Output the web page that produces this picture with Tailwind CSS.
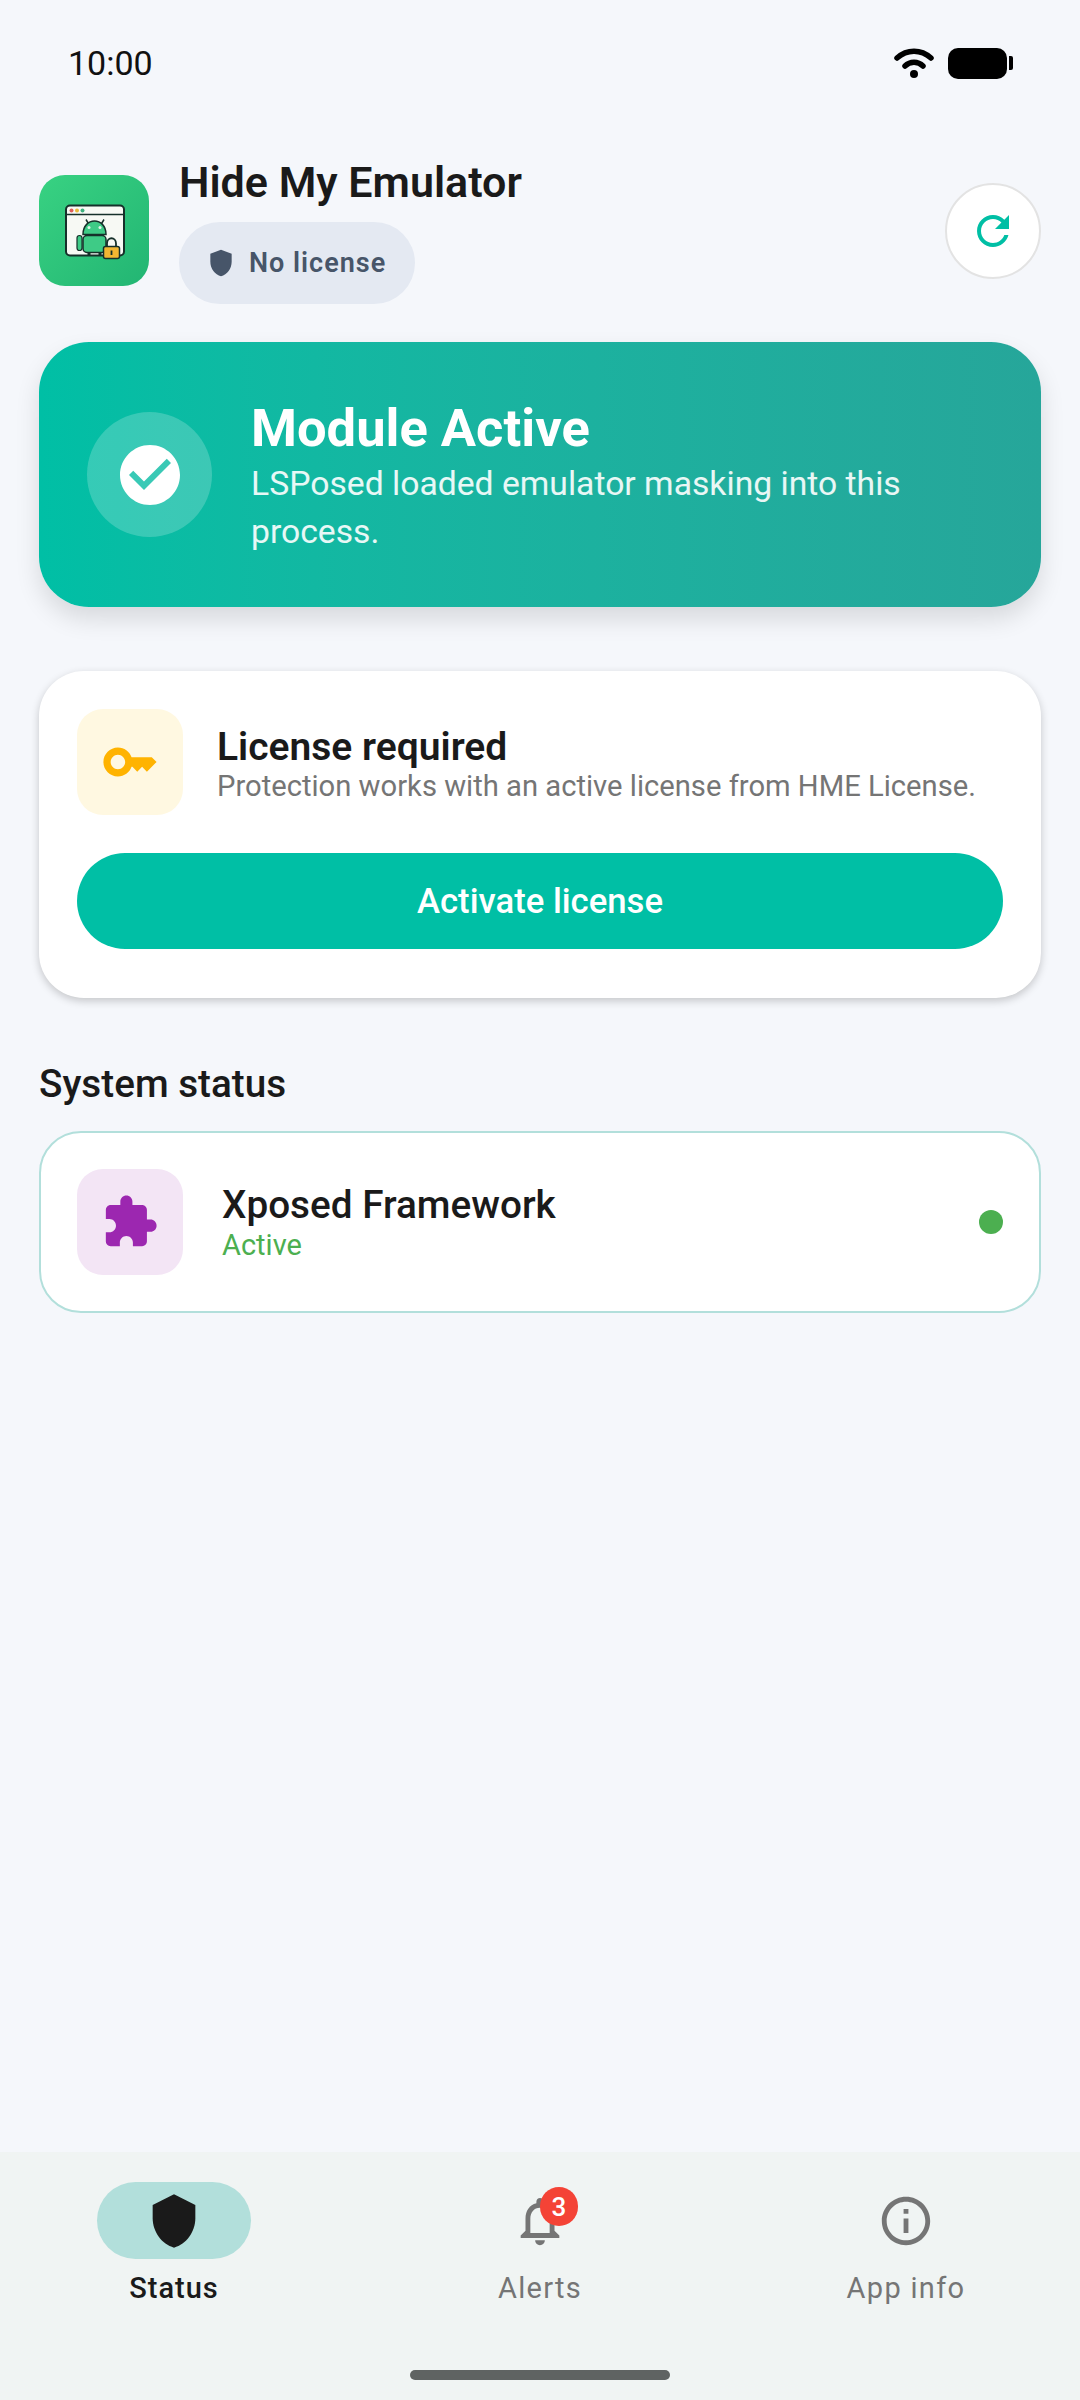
<!DOCTYPE html>
<html lang="en">
<head>
    <meta charset="UTF-8">
    <title>Hide My Emulator</title>
    <script src="https://cdn.jsdelivr.net/npm/@tailwindcss/browser@4"></script>
</head>
<body class="font-['Roboto',sans-serif] bg-[#f5f7fb]">
<div class="flex flex-col w-[1080px] h-[2400px] overflow-hidden">

    <!-- status bar -->
    <div class="flex items-center justify-between h-[124px] pt-[2px] pl-[68px] pr-[67px] shrink-0">
        <span class="text-[34px] leading-none text-[#111]">10:00</span>
        <div class="flex items-center gap-[14px]">
            <svg class="w-[40px] h-[32px]" viewBox="0 0 40 32" fill="none" stroke="#000" stroke-width="5.5" stroke-linecap="round">
                <path d="M3 11C13 2 27 2 37 11"/>
                <path d="M11 19C16 14 24 14 29 19"/>
                <circle cx="20" cy="27" r="4" fill="#000" stroke="none"/>
            </svg>
            <div class="flex items-center gap-[2px]">
                <div class="w-[59px] h-[31px] rounded-[10px] bg-black"></div>
                <div class="w-[4px] h-[14px] rounded-r-[2px] bg-black"></div>
            </div>
        </div>
    </div>

    <main class="flex flex-col px-[39px] pt-[33px]">
        <!-- header -->
        <div class="flex items-center">
            <div class="w-[110px] h-[111px] rounded-[26px] bg-linear-to-br from-[#38d282] to-[#22b573] shrink-0">
                <svg class="w-full h-full" viewBox="0 0 110 110" fill="none">
                    <rect x="27" y="30" width="58" height="50" rx="4" fill="#f7f9f4" stroke="#16302a" stroke-width="2"/>
                    <path d="M27 39H85" stroke="#16302a" stroke-width="1.5"/>
                    <circle cx="32.500" cy="35" r="2" fill="#e0605a"/>
                    <circle cx="38" cy="35" r="2" fill="#e8b93c"/>
                    <circle cx="43.500" cy="35" r="2" fill="#3fb27f"/>
                    <path d="M47 44l3 5M65 44l-3 5" stroke="#16302a" stroke-width="1.500"/>
                    <path d="M44 59c0-18 23-18 23 0z" fill="#3ecb86" stroke="#16302a" stroke-width="1.500"/>
                    <rect x="44" y="60" width="23" height="17" rx="4" fill="#3ecb86" stroke="#16302a" stroke-width="1.500"/>
                    <rect x="38" y="60" width="5" height="15" rx="2.500" fill="#3ecb86" stroke="#16302a" stroke-width="1.200"/>
                    <path d="M50 77v3M61 77v3" stroke="#16302a" stroke-width="3"/>
                    <circle cx="50" cy="52" r="1.500" fill="#dff5e8"/>
                    <circle cx="61" cy="52" r="1.500" fill="#dff5e8"/>
                    <path d="M68 72v-4c0-7 9-7 9 0v4" stroke="#16302a" stroke-width="1.800"/>
                    <rect x="64.500" y="71" width="16" height="12" rx="2" fill="#f2b632" stroke="#16302a" stroke-width="1.500"/>
                    <path d="M72.500 75v4.500" stroke="#16302a" stroke-width="1.800"/>
                </svg>
            </div>
            <div class="flex flex-col items-start ml-[30px]">
                <h1 class="text-[43px] leading-[50px] font-semibold text-[#1a1a1a]">Hide My Emulator</h1>
                <div class="flex items-center h-[82px] mt-[15px] pl-[28px] pr-[29px] rounded-full bg-[#e4e9f2]">
                    <svg class="w-[32px] h-[32px] -ml-[2px]" viewBox="0 0 24 24" fill="#475569"><path d="M12 2L4 5v6.090c0 5.050 3.410 9.760 8 10.910 4.590-1.150 8-5.860 8-10.910V5l-8-3z"/></svg>
                    <span class="ml-[12px] text-[27px] font-semibold tracking-[1px] text-[#475569]">No license</span>
                </div>
            </div>
            <button class="flex items-center justify-center w-[96px] h-[96px] ml-auto rounded-full bg-white border-2 border-[#e3e3e3]">
                <svg class="w-[48px] h-[48px]" viewBox="0 0 24 24" fill="#00bfa5"><path d="M17.650 6.350C16.200 4.900 14.210 4 12 4c-4.420 0-7.990 3.580-7.990 8s3.570 8 7.990 8c3.730 0 6.840-2.550 7.730-6h-2.080c-.820 2.330-3.040 4-5.650 4-3.310 0-6-2.690-6-6s2.690-6 6-6c1.660 0 3.140.690 4.220 1.780L13 11h7V4l-2.350 2.350z"/></svg>
            </button>
        </div>

        <!-- module banner -->
        <section class="flex items-center h-[265px] mt-[38px] pl-[48px] pr-[40px] rounded-[50px] bg-linear-to-r from-[#00bfa5] to-[#26a69a] shadow-[0_12px_24px_rgba(0,0,0,0.12)]">
            <div class="flex items-center justify-center w-[125px] h-[125px] rounded-full bg-white/20 shrink-0">
                <svg class="w-[72px] h-[72px]" viewBox="0 0 24 24" fill="#fff"><path d="M12 2C6.480 2 2 6.480 2 12s4.480 10 10 10 10-4.480 10-10S17.520 2 12 2zm-2 15l-5-5 1.410-1.410L10 14.170l7.590-7.590L19 8l-9 9z"/></svg>
            </div>
            <div class="ml-[39px] pt-[6px]">
                <h2 class="mb-[3px] text-[52.500px] leading-[58px] font-bold text-white">Module Active</h2>
                <p class="text-[33.700px] leading-[48px] text-white/90">LSPosed loaded emulator masking into this process.</p>
            </div>
        </section>

        <!-- license card -->
        <section class="mt-[64px] pt-[38px] px-[38px] pb-[49px] rounded-[45px] bg-white shadow-[0_3px_8px_rgba(0,0,0,0.2)]">
            <div class="flex items-center">
                <div class="flex items-center justify-center w-[106px] h-[106px] rounded-[26px] bg-[#fff8e1] shrink-0">
                    <svg class="w-[58px] h-[58px]" viewBox="0 0 24 24" fill="#ffb300"><path d="M21 10h-8.350C11.830 7.670 9.610 6 7 6c-3.310 0-6 2.690-6 6s2.690 6 6 6c2.610 0 4.830-1.670 5.650-4H13l2 2 2-2 2 2 4-4.040L21 10zM7 15c-1.650 0-3-1.350-3-3s1.350-3 3-3 3 1.350 3 3-1.350 3-3 3z"/></svg>
                </div>
                <div class="ml-[34px] pt-[3px]">
                    <h3 class="text-[39px] leading-[44px] font-semibold text-[#1a1a1a]">License required</h3>
                    <p class="text-[29.200px] leading-[34px] text-[#757575]">Protection works with an active license from HME License.</p>
                </div>
            </div>
            <button class="w-full h-[96px] mt-[38px] rounded-full bg-[#00bfa5] text-[34.700px] font-medium text-white">Activate license</button>
        </section>

        <!-- system status -->
        <h2 class="mt-[61px] text-[38.700px] leading-[50px] font-medium text-[#1a1a1a]">System status</h2>
        <section class="flex items-center h-[182px] mt-[22px] pl-[36px] pr-[36px] rounded-[42px] bg-white border-2 border-[#b2dfdb]">
            <div class="flex items-center justify-center w-[106px] h-[106px] rounded-[26px] bg-[#f3e5f5] shrink-0">
                <svg class="w-[58px] h-[58px]" viewBox="0 0 24 24" fill="#9c27b0"><path d="M20.500 11H19V7c0-1.100-.9-2-2-2h-4V3.500C13 2.120 11.880 1 10.500 1S8 2.120 8 3.500V5H4c-1.100 0-1.990.9-1.990 2v3.800H3.500c1.490 0 2.700 1.210 2.700 2.700s-1.210 2.700-2.700 2.700H2V20c0 1.100.9 2 2 2h3.800v-1.500c0-1.490 1.210-2.700 2.700-2.700 1.490 0 2.700 1.210 2.700 2.700V22H17c1.100 0 2-.9 2-2v-4h1.500c1.380 0 2.500-1.120 2.500-2.500S21.880 11 20.500 11z"/></svg>
            </div>
            <div class="ml-[39px]">
                <h3 class="text-[38.700px] leading-[46px] font-medium text-[#1a1a1a]">Xposed Framework</h3>
                <p class="text-[29px] leading-[34px] text-[#4caf50]">Active</p>
            </div>
            <span class="w-[24px] h-[24px] ml-auto rounded-full bg-[#4caf50]"></span>
        </section>
    </main>

    <!-- bottom nav -->
    <nav class="relative mt-auto h-[248px] px-[97px] pt-[30px] bg-[#f0f4f3] shrink-0">
        <div class="flex justify-between">
            <div class="flex flex-col items-center w-[154px]">
                <div class="flex items-center justify-center w-[154px] h-[77px] rounded-full bg-[#b2dfdb]">
                    <svg class="w-[64px] h-[64px]" viewBox="0 0 24 24" fill="#1a1a1a"><path d="M12 2L4 6v5c0 5.050 3.410 9.760 8 11 4.590-1.240 8-5.950 8-11V6l-8-4z"/></svg>
                </div>
                <span class="mt-[12px] text-[29px] leading-[34px] font-medium tracking-[1px] text-[#1a1a1a]">Status</span>
            </div>
            <div class="flex flex-col items-center w-[154px]">
                <div class="relative flex items-center justify-center w-[154px] h-[77px]">
                    <svg class="w-[58px] h-[58px]" viewBox="0 0 24 24" fill="#757575"><path d="M12 22c1.100 0 2-.9 2-2h-4c0 1.100.89 2 2 2zm6-6v-5c0-3.070-1.640-5.640-4.500-6.320V4c0-.83-.67-1.500-1.500-1.500s-1.500.67-1.500 1.500v.68C7.630 5.360 6 7.920 6 11v5l-2 2v1h16v-1l-2-2zm-2 1H8v-6c0-2.480 1.510-4.500 4-4.500s4 2.020 4 4.500v6z"/></svg>
                    <span class="absolute left-[77px] top-[5px] flex items-center justify-center w-[38px] h-[39px] rounded-full bg-[#f44336] text-[26px] leading-none font-medium text-white">3</span>
                </div>
                <span class="mt-[12px] text-[29px] leading-[34px] font-normal tracking-[1.300px] text-[#757575] whitespace-nowrap">Alerts</span>
            </div>
            <div class="flex flex-col items-center w-[154px]">
                <div class="flex items-center justify-center w-[154px] h-[77px]">
                    <svg class="w-[58px] h-[58px]" viewBox="0 0 24 24" fill="#757575"><path d="M11 7h2v2h-2zm0 4h2v6h-2zm1-9C6.480 2 2 6.480 2 12s4.480 10 10 10 10-4.480 10-10S17.520 2 12 2zm0 18c-4.410 0-8-3.590-8-8s3.590-8 8-8 8 3.590 8 8-3.590 8-8 8z"/></svg>
                </div>
                <span class="mt-[12px] text-[29px] leading-[34px] font-normal tracking-[1.300px] text-[#757575] whitespace-nowrap">App info</span>
            </div>
        </div>
        <div class="absolute left-[410px] bottom-[20px] w-[260px] h-[10px] rounded-full bg-[#5f6362]"></div>
    </nav>
</div>
</body>
</html>
